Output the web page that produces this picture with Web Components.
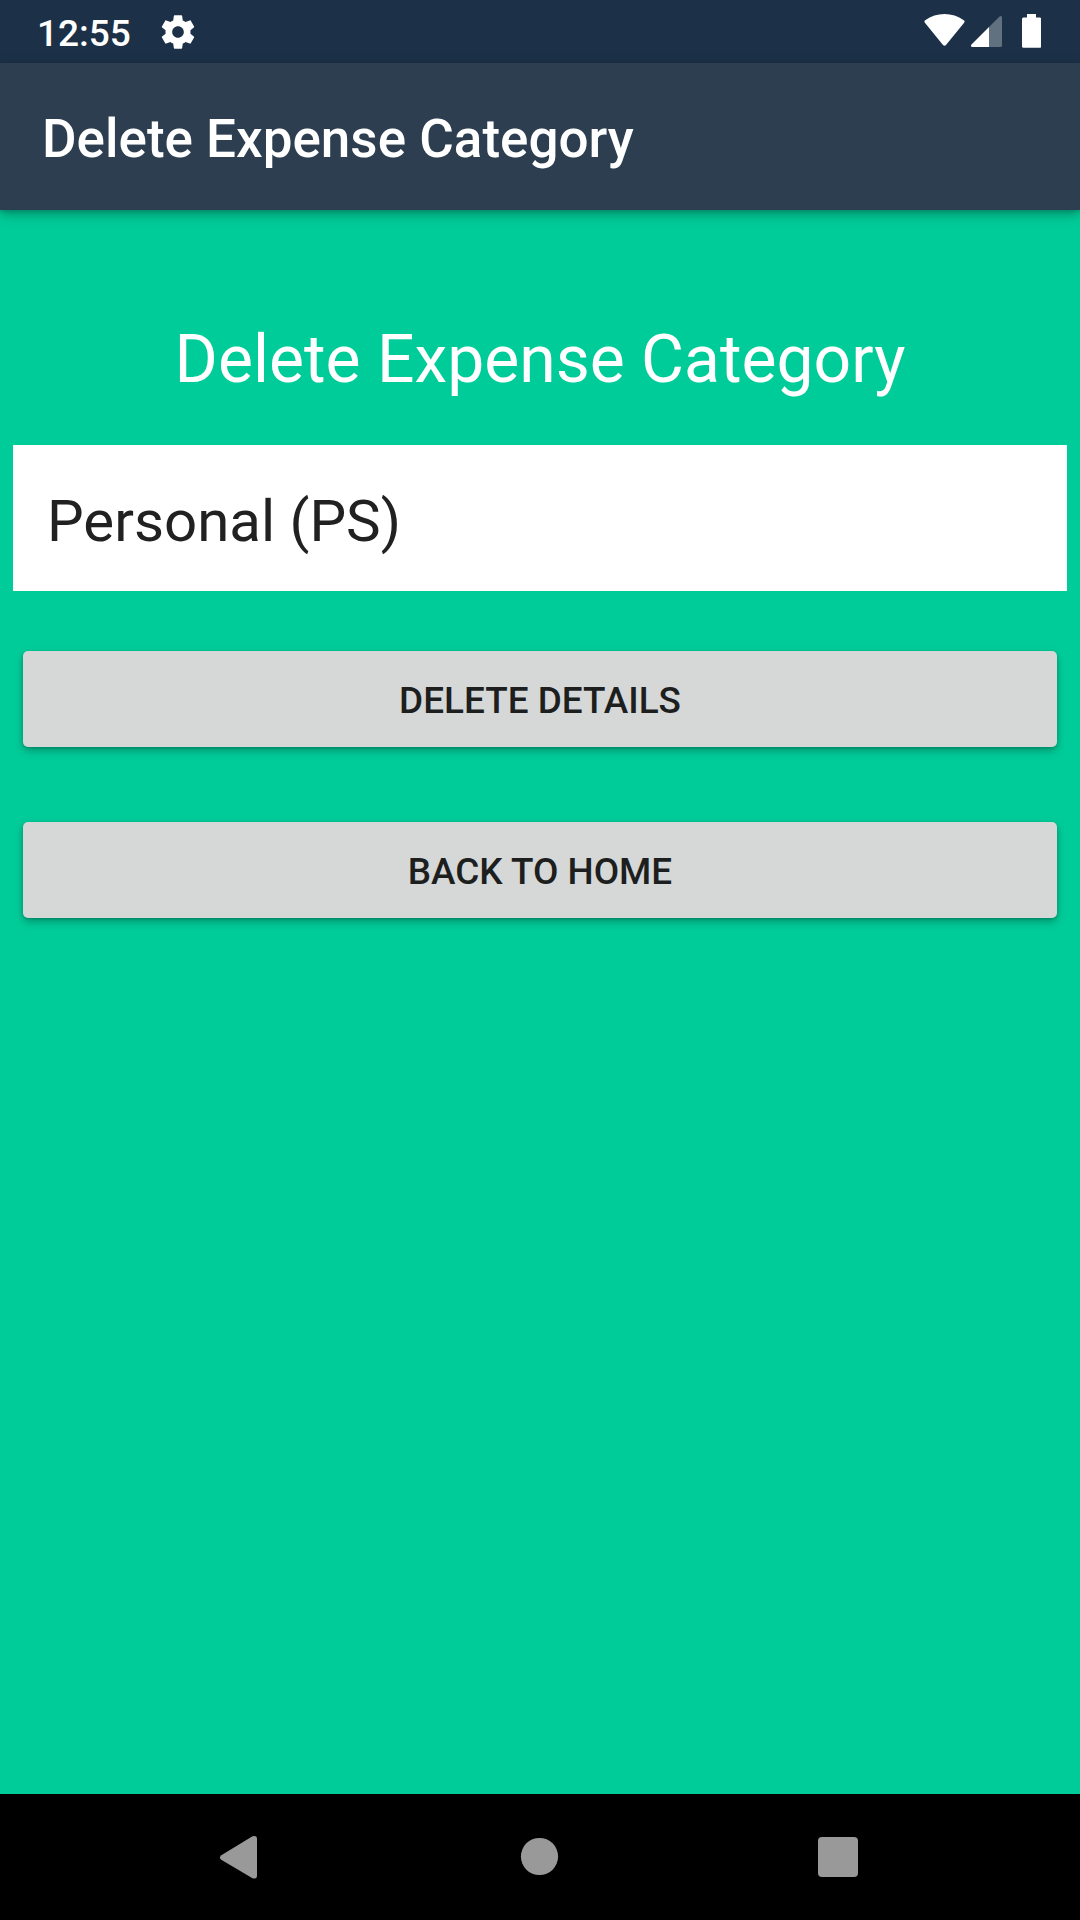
<!DOCTYPE html>
<html lang="en">
<head>
<meta charset="utf-8">
<title>Delete Expense Category</title>
<style>
html,body{margin:0;height:100%}
body{font-family:Roboto,sans-serif;background:#00cc99;overflow:hidden}
</style>
</head>
<body>
<expense-screen></expense-screen>
<script>
const define = (name, html) => {
  const t = document.createElement('template');
  t.innerHTML = html;
  customElements.define(name, class extends HTMLElement {
    constructor() {
      super();
      this.attachShadow({mode: 'open'}).appendChild(t.content.cloneNode(true));
    }
  });
};

define('status-bar', `
<style>
:host{display:flex;box-sizing:border-box;height:63px;background:#1c3148;color:#fff;padding:0 39px 0 37px;justify-content:space-between}
.left,.right{display:flex}
.clock{font-size:37px;font-weight:500;line-height:44px;padding-top:12px;width:121px;white-space:nowrap}
svg{display:block}
.gear{margin:12px 0 0 0}
</style>
<div class="left">
  <span class="clock"><slot></slot></span>
  <svg class="gear" width="40" height="40" viewBox="0 0 24 24" fill="#fff"><path d="M19.43 12.98c.04-.32.07-.64.07-.98s-.03-.66-.07-.98l2.11-1.65c.19-.15.24-.42.12-.64l-2-3.46c-.12-.22-.39-.3-.61-.22l-2.49 1c-.52-.4-1.08-.73-1.69-.98l-.38-2.65C14.46 2.18 14.25 2 14 2h-4c-.25 0-.46.18-.49.42l-.38 2.65c-.61.25-1.17.59-1.69.98l-2.49-1c-.23-.09-.49 0-.61.22l-2 3.46c-.13.22-.07.49.12.64l2.11 1.65c-.04.32-.07.65-.07.98s.03.66.07.98l-2.11 1.65c-.19.15-.24.42-.12.64l2 3.46c.12.22.39.3.61.22l2.49-1c.52.4 1.08.73 1.69.98l.38 2.65c.03.24.24.42.49.42h4c.25 0 .46-.18.49-.42l.38-2.65c.61-.25 1.17-.59 1.69-.98l2.49 1c.23.09.49 0 .61-.22l2-3.46c.12-.22.07-.49-.12-.64l-2.11-1.65zM12 15.5c-1.93 0-3.5-1.57-3.5-3.5s1.57-3.5 3.5-3.5 3.5 1.57 3.5 3.5-1.57 3.5-3.5 3.5z"/></svg>
</div>
<div class="right">
  <svg width="117" height="63" viewBox="0 0 117 63">
    <path fill="#fff" d="M.9 22.8C.1 22 .3 21 1.2 20.3 7 16.2 13.5 14 20.5 14S34 16.200 39.800 20.300C40.700 21 40.900 22 40.100 22.800L22 45Q20.500 46.500 19 45Z"/>
    <path fill="#fff" d="M65 27V47H48.500Q46 46.500 47.500 44.500Z"/>
    <path fill="#62717f" d="M65 27L75.300 16.700Q78 15 78 18V45.500Q78 47 76.500 47H65Z"/>
    <path fill="#fff" d="M103 14H112V17.500H115.500Q117.300 17.500 117.300 19V46.300Q117.300 47.800 115.500 47.800H99.500Q98 47.800 98 46.300V19Q98 17.500 99.500 17.500H103Z"/>
  </svg>
</div>`);

define('app-bar', `
<style>
:host{display:flex;box-sizing:border-box;height:147px;padding-left:42px;align-items:center;background:#2d3e50;color:#fff;position:relative;box-shadow:0 4px 12px rgba(0,0,0,.3),0 2px 4px rgba(0,0,0,.12)}
h1{margin:4px 0 0;font-size:53px;font-weight:500;line-height:62px;white-space:nowrap}
</style><h1><slot></slot></h1>`);

define('form-heading', `
<style>
:host{display:block;text-align:center;color:#fff;font-size:66px;line-height:78px;white-space:nowrap}
</style><slot></slot>`);

define('category-field', `
<style>
:host{display:flex;box-sizing:border-box;height:146px;margin:0 13px;padding:5px 34px 0;align-items:center;background:#fff;color:#212121;font-size:58.2px;line-height:68px}
</style><span><slot></slot></span>`);

define('raised-button', `
<style>
:host{display:block;margin:0 23px}
button{display:flex;width:100%;height:96px;border:0;border-radius:5px;padding:3px 0 0;align-items:center;justify-content:center;background:#d6d8d7;color:#1d1e1e;font:500 36.9px/44px Roboto,sans-serif;text-transform:uppercase;box-shadow:0 4px 8px rgba(0,0,0,.26),0 1px 3px rgba(0,0,0,.18)}
</style><button><slot></slot></button>`);

define('nav-bar', `
<style>
:host{display:flex;box-sizing:border-box;height:126px;background:#000}
svg{display:block}
</style>
<svg width="1080" height="126" viewBox="0 0 1080 126" fill="#999">
  <path d="M221.300 61.200L252.500 42.300Q257 41 257 45V82Q257 85.500 252.500 84.200L221.300 65.800Q218.500 63.500 221.300 61.200Z"/>
  <circle cx="539.500" cy="62.500" r="18.600"/>
  <rect x="818" y="43" width="40" height="40" rx="4"/>
</svg>`);

define('expense-screen', `
<style>
:host{display:flex;flex-direction:column;width:1080px;height:1920px;background:#00cc99}
main{flex:1;display:flex;flex-direction:column}
form-heading{margin-top:111px}
category-field{margin-top:46px}
.first{margin-top:60px}
.second{margin-top:75px}
</style>
<status-bar>12:55</status-bar>
<app-bar>Delete Expense Category</app-bar>
<main>
  <form-heading>Delete Expense Category</form-heading>
  <category-field>Personal (PS)</category-field>
  <raised-button class="first">Delete Details</raised-button>
  <raised-button class="second">Back to Home</raised-button>
</main>
<nav-bar></nav-bar>`);
</script>
</body>
</html>
